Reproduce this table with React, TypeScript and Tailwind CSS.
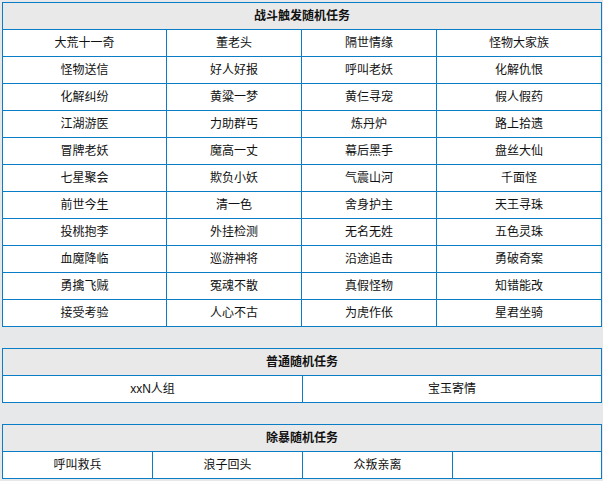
const battle = [
  ["大荒十一奇", "董老头", "隔世情缘", "怪物大家族"],
  ["怪物送信", "好人好报", "呼叫老妖", "化解仇恨"],
  ["化解纠纷", "黄粱一梦", "黄仨寻宠", "假人假药"],
  ["江湖游医", "力助群丐", "炼丹炉", "路上拾遗"],
  ["冒牌老妖", "魔高一丈", "幕后黑手", "盘丝大仙"],
  ["七星聚会", "欺负小妖", "气震山河", "千面怪"],
  ["前世今生", "清一色", "舍身护主", "天王寻珠"],
  ["投桃抱李", "外挂检测", "无名无姓", "五色灵珠"],
  ["血魔降临", "巡游神将", "沿途追击", "勇破奇案"],
  ["勇擒飞贼", "冤魂不散", "真假怪物", "知错能改"],
  ["接受考验", "人心不古", "为虎作伥", "星君坐骑"],
];

const normal = ["xxN人组", "宝玉寄情"];
const outlaw = ["呼叫救兵", "浪子回头", "众叛亲离", ""];

function Cell({ text }: { text: string }) {
  return (
    <div className="h-[26px] bg-white flex items-center justify-center text-[12px] text-[#111]">
      {text}
    </div>
  );
}

function Header({ title }: { title: string }) {
  return (
    <div className="col-span-full h-[26px] bg-[#e9e9e9] flex items-center justify-center text-[12px] font-bold text-[#111]">
      {title}
    </div>
  );
}

export default function App() {
  return (
    <div
      className="min-h-[481px] bg-[#e7e8e9] pt-[2px] pl-[2px]"
      style={{ fontFamily: '"Liberation Sans", "Noto Sans CJK SC", sans-serif' }}
    >
      <div className="w-[600px] flex flex-col gap-[21px]">
        <div className="grid grid-cols-[163px_134px_134px_1fr] gap-px p-px bg-[#0b7dc7]">
          <Header title="战斗触发随机任务" />
          {battle.flat().map((t, i) => (
            <Cell key={i} text={t} />
          ))}
        </div>

        <div className="grid grid-cols-[299px_1fr] gap-px p-px bg-[#0b7dc7]">
          <Header title="普通随机任务" />
          {normal.map((t, i) => (
            <Cell key={i} text={t} />
          ))}
        </div>

        <div className="grid grid-cols-[149px_149px_149px_1fr] gap-px p-px bg-[#0b7dc7]">
          <Header title="除暴随机任务" />
          {outlaw.map((t, i) => (
            <Cell key={i} text={t} />
          ))}
        </div>
      </div>
    </div>
  );
}
